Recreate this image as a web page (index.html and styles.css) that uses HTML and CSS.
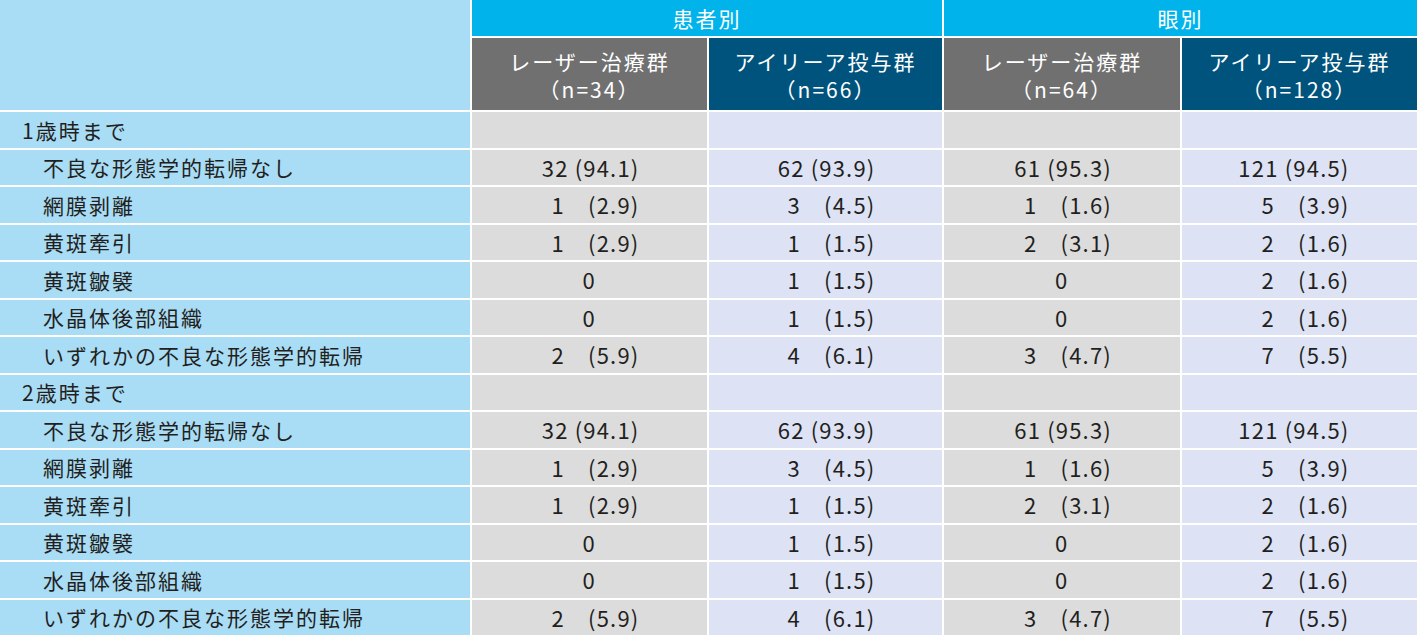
FILE: index.html
```html
<!DOCTYPE html>
<html lang="ja">
<head>
<meta charset="utf-8">
<title>不良な形態学的転帰</title>
<link rel="stylesheet" href="styles.css">
</head>
<body>
<table class="tbl">
  <colgroup>
    <col class="c-label">
    <col class="c1">
    <col class="c2">
    <col class="c3">
    <col class="c4">
  </colgroup>
  <thead>
    <tr class="h1">
      <th class="blank" rowspan="2"></th>
      <th class="grp" colspan="2">患者別</th>
      <th class="grp" colspan="2">眼別</th>
    </tr>
    <tr class="h2">
      <th class="laser"><span class="hl">レーザー治療群</span><span class="hl">（n=34）</span></th>
      <th class="eylea"><span class="hl">アイリーア投与群</span><span class="hl">（n=66）</span></th>
      <th class="laser"><span class="hl">レーザー治療群</span><span class="hl">（n=64）</span></th>
      <th class="eylea"><span class="hl">アイリーア投与群</span><span class="hl">（n=128）</span></th>
    </tr>
  </thead>
  <tbody>
    <tr><td class="lbl grp-lbl">1歳時まで</td><td class="g"></td><td class="b"></td><td class="g"></td><td class="b"></td></tr>
    <tr><td class="lbl sub">不良な形態学的転帰なし</td><td class="g"><span class="v">32 (94.1)</span></td><td class="b"><span class="v">62 (93.9)</span></td><td class="g"><span class="v">61 (95.3)</span></td><td class="b"><span class="v">121 (94.5)</span></td></tr>
    <tr><td class="lbl sub">網膜剥離</td><td class="g"><span class="v">1　(2.9)</span></td><td class="b"><span class="v">3　(4.5)</span></td><td class="g"><span class="v">1　(1.6)</span></td><td class="b"><span class="v">5　(3.9)</span></td></tr>
    <tr><td class="lbl sub">黄斑牽引</td><td class="g"><span class="v">1　(2.9)</span></td><td class="b"><span class="v">1　(1.5)</span></td><td class="g"><span class="v">2　(3.1)</span></td><td class="b"><span class="v">2　(1.6)</span></td></tr>
    <tr><td class="lbl sub">黄斑皺襞</td><td class="g"><span class="z">0</span></td><td class="b"><span class="v">1　(1.5)</span></td><td class="g"><span class="z">0</span></td><td class="b"><span class="v">2　(1.6)</span></td></tr>
    <tr><td class="lbl sub">水晶体後部組織</td><td class="g"><span class="z">0</span></td><td class="b"><span class="v">1　(1.5)</span></td><td class="g"><span class="z">0</span></td><td class="b"><span class="v">2　(1.6)</span></td></tr>
    <tr><td class="lbl sub">いずれかの不良な形態学的転帰</td><td class="g"><span class="v">2　(5.9)</span></td><td class="b"><span class="v">4　(6.1)</span></td><td class="g"><span class="v">3　(4.7)</span></td><td class="b"><span class="v">7　(5.5)</span></td></tr>
    <tr><td class="lbl grp-lbl">2歳時まで</td><td class="g"></td><td class="b"></td><td class="g"></td><td class="b"></td></tr>
    <tr><td class="lbl sub">不良な形態学的転帰なし</td><td class="g"><span class="v">32 (94.1)</span></td><td class="b"><span class="v">62 (93.9)</span></td><td class="g"><span class="v">61 (95.3)</span></td><td class="b"><span class="v">121 (94.5)</span></td></tr>
    <tr><td class="lbl sub">網膜剥離</td><td class="g"><span class="v">1　(2.9)</span></td><td class="b"><span class="v">3　(4.5)</span></td><td class="g"><span class="v">1　(1.6)</span></td><td class="b"><span class="v">5　(3.9)</span></td></tr>
    <tr><td class="lbl sub">黄斑牽引</td><td class="g"><span class="v">1　(2.9)</span></td><td class="b"><span class="v">1　(1.5)</span></td><td class="g"><span class="v">2　(3.1)</span></td><td class="b"><span class="v">2　(1.6)</span></td></tr>
    <tr><td class="lbl sub">黄斑皺襞</td><td class="g"><span class="z">0</span></td><td class="b"><span class="v">1　(1.5)</span></td><td class="g"><span class="z">0</span></td><td class="b"><span class="v">2　(1.6)</span></td></tr>
    <tr><td class="lbl sub">水晶体後部組織</td><td class="g"><span class="z">0</span></td><td class="b"><span class="v">1　(1.5)</span></td><td class="g"><span class="z">0</span></td><td class="b"><span class="v">2　(1.6)</span></td></tr>
    <tr><td class="lbl sub">いずれかの不良な形態学的転帰</td><td class="g"><span class="v">2　(5.9)</span></td><td class="b"><span class="v">4　(6.1)</span></td><td class="g"><span class="v">3　(4.7)</span></td><td class="b"><span class="v">7　(5.5)</span></td></tr>
  </tbody>
</table>
</body>
</html>
```

FILE: styles.css
```css
html, body {
  margin: 0;
  padding: 0;
  background: #ffffff;
  overflow: hidden;
}

body {
  font-family: "Noto Sans CJK JP", "Noto Sans", sans-serif;
  color: #231f20;
}

.tbl {
  table-layout: fixed;
  width: 1421px;
  margin: -2px 0 0 -2px;
  border-collapse: separate;
  border-spacing: 2px;
  font-size: 21px;
  letter-spacing: 2px;
}

.c-label { width: 470px; }
.c1 { width: 235px; }
.c2 { width: 233px; }
.c3 { width: 236px; }
.c4 { width: 235px; }

.tbl th,
.tbl td {
  padding: 0;
  font-weight: normal;
  text-align: center;
  vertical-align: middle;
}

.blank { background: #a9dcf5; }

.h1 th { height: 36px; line-height: 24px; }
.grp {
  background: #00b4eb;
  color: #ffffff;
}

.h2 th {
  height: 72px;
  color: #ffffff;
  padding-top: 2px;
  box-sizing: border-box;
}
.hl {
  display: block;
  line-height: 30px;
}
.hl + .hl { margin-top: -2px; }
.laser { background: #707070; }
.eylea { background: #00537c; }

.tbl tbody td { height: 35.5px; line-height: 24px; }

.lbl {
  background: #a9dcf5;
  text-align: left !important;
}
.grp-lbl { padding-left: 22px !important; }
.sub { padding-left: 43px !important; }

.g { background: #dcdcdc; }
.b { background: #dde3f4; }

.v {
  display: inline-block;
  width: 112px;
  margin-right: 12px;
  text-align: right;
  white-space: pre;
  font-size: 22px;
  letter-spacing: 1.2px;
}
.z { font-size: 22px; }
```
